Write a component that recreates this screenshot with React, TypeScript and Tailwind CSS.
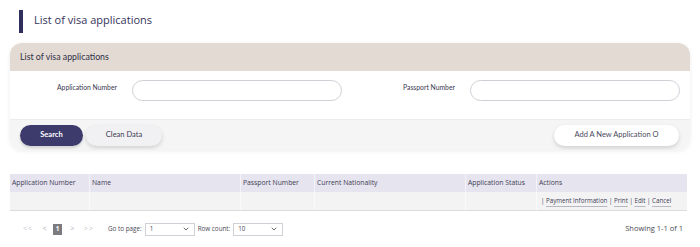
import { ChevronDown } from 'lucide-react';

const columns = [
  { label: 'Application Number', w: 'w-[79px] shrink-0' },
  { label: 'Name', w: 'w-[151px] shrink-0' },
  { label: 'Passport Number', w: 'w-[74px] shrink-0' },
  { label: 'Current Nationality', w: 'w-[151px] shrink-0' },
  { label: 'Application Status', w: 'w-[71px] shrink-0' },
  { label: 'Actions', w: 'flex-1 min-w-0' },
];

const App = () => {
  return (
    <div className="w-[700px] h-[247px] bg-white overflow-hidden font-['Lato',sans-serif] text-[#3a3a55]">
      {/* page title */}
      <div className="flex items-center h-[43px] pl-[19px]">
        <div className="w-[4px] h-[23px] bg-[#2f2e5c] -mt-[1px]" />
        <h1 className="ml-[11px] font-['Open_Sans',sans-serif] text-[11px] text-[#34335a] -mt-[3px]">
          List of visa applications
        </h1>
      </div>

      {/* search card */}
      <div className="mx-[10px] rounded-[12px] shadow-[0_1px_4px_rgba(0,0,0,0.08)] overflow-hidden">
        <div className="h-[28px] bg-[#e3dbd3] flex items-center pl-[10px] text-[8.8px] text-[#2e2d45]">
          List of visa applications
        </div>
        <div className="h-[48px] bg-white flex items-start pt-[9px]">
          <label className="w-[107px] h-[21px] flex items-center justify-end text-[6.8px] text-[#3a3950] -mt-[3px]">
            Application Number
          </label>
          <input className="ml-[15px] w-[210px] h-[21px] rounded-full border border-[#cfcfd6] outline-none" />
          <label className="w-[113px] h-[21px] flex items-center justify-end text-[6.8px] text-[#3a3950] -mt-[3px]">
            Passport Number
          </label>
          <input className="ml-[15px] w-[210px] h-[21px] rounded-full border border-[#cfcfd6] outline-none" />
        </div>
        <div className="h-[31px] bg-[#f5f5f6] flex items-center px-[10px] border-t border-[#ececee]">
          <button className="w-[63px] h-[21px] rounded-full bg-[#3d3a6c] text-white text-[7.5px] font-bold shadow-[0_2px_3px_rgba(0,0,0,0.15)]">
            Search
          </button>
          <button className="ml-[3px] w-[76px] h-[21px] rounded-full bg-[#f1f1f3] text-[#3a3950] text-[7.5px] shadow-[0_2px_4px_rgba(0,0,0,0.15)]">
            Clean Data
          </button>
          <button className="ml-auto mr-[1px] w-[125px] h-[21px] rounded-full bg-white text-[#4a4a5a] text-[7.5px] shadow-[0_2px_4px_rgba(0,0,0,0.15)]">
            Add A New Application O
          </button>
        </div>
      </div>

      {/* table */}
      <div className="mt-[24px] ml-[10px] w-[677px] font-['Open_Sans',sans-serif] text-[6.8px] text-[#3e3d55]">
        <div className="flex h-[18px] bg-[#e6e4ee]">
          {columns.map((c, i) => (
            <div
              key={c.label}
              className={`${c.w} flex items-center pl-[2px] ${i > 0 ? 'border-l border-[#f4f3f8]' : ''}`}
            >
              {c.label}
            </div>
          ))}
        </div>
        <div className="flex h-[19px] bg-[#f3f3f4] border-b border-[#dcdce0]">
          {columns.map((c, i) => (
            <div
              key={c.label}
              className={`${c.w} flex items-center pl-[4px] ${i > 0 ? 'border-l border-[#fafafa]' : ''}`}
            >
              {c.label === 'Actions' && (
                <span className="whitespace-nowrap text-[6.2px]">
                  | <span className="underline decoration-[#b8b8c2] underline-offset-[3px]">Payment Information</span> |{' '}
                  <span className="underline decoration-[#b8b8c2] underline-offset-[3px]">Print</span> |{' '}
                  <span className="underline decoration-[#b8b8c2] underline-offset-[3px]">Edit</span> |{' '}
                  <span className="underline decoration-[#b8b8c2] underline-offset-[3px]">Cancel</span>
                </span>
              )}
            </div>
          ))}
        </div>
      </div>

      {/* pagination */}
      <div className="mt-[11px] ml-[22px] mr-[17px] flex items-center h-[14px] font-['Open_Sans',sans-serif] text-[6.3px] text-[#4a4a55]">
        <span className="w-[12px] text-center text-[7px] text-[#c4c4c8] tracking-[1px]">&lt;&lt;</span>
        <span className="ml-[8px] w-[5px] text-center text-[7px] text-[#b0b0b6]">&lt;</span>
        <span className="ml-[6px] w-[9px] h-[11px] bg-[#7c7c80] text-white flex items-center justify-center font-bold">1</span>
        <span className="ml-[8px] w-[5px] text-center text-[7px] text-[#b0b0b6]">&gt;</span>
        <span className="ml-[9px] w-[10px] text-center text-[7px] text-[#c4c4c8] tracking-[1px]">&gt;&gt;</span>
        <span className="ml-[14px]">Go to page:</span>
        <div className="ml-[3px] w-[50px] h-[13px] border border-[#d0d0d6] flex items-center justify-between px-[4px]">
          <span>1</span>
          <ChevronDown size={8} strokeWidth={2.5} />
        </div>
        <span className="ml-[3px]">Row count:</span>
        <div className="ml-[3px] w-[50px] h-[13px] border border-[#d0d0d6] flex items-center justify-between px-[4px]">
          <span>10</span>
          <ChevronDown size={8} strokeWidth={2.5} />
        </div>
        <span className="ml-auto text-[7.5px]">Showing 1-1 of 1</span>
      </div>
    </div>
  );
};

export default App;
